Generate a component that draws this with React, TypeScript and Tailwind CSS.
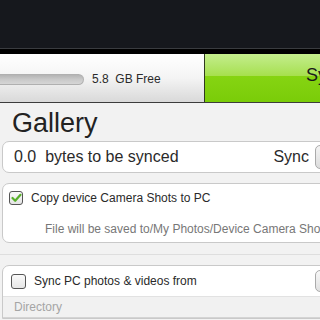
import React from 'react';

const font = { fontFamily: '"Liberation Sans", Arial, sans-serif' };

const App = () => {
  return (
    <div className="w-[320px] h-[320px] overflow-hidden bg-[#f2f2f2] relative" style={font}>
      {/* dark header */}
      <div className="h-[49px] bg-[#16181d] border-b border-[#3a3c40]" />
      <div className="h-[5px] bg-black" />

      {/* storage bar + sync button */}
      <div className="flex h-[49px] border-b border-[#3c3c3c]">
        <div className="flex-1 flex items-center bg-gradient-to-b from-[#ffffff] via-[#f4f4f4] to-[#d9d9d9]">
          <div className="w-[84px] h-[11px] rounded-r-full bg-gradient-to-b from-[#b4b4b4] via-[#c9c9c9] to-[#d6d6d6] border border-[#b0b0b0] border-l-0 mt-[2px]" />
          <span className="ml-[8px] text-[12px] text-[#2a2a2a] mt-[2px]">5.8&nbsp;&nbsp;GB Free</span>
        </div>
        <div className="w-[116px] border-l border-[#2f3a20] flex flex-col overflow-hidden">
          <div className="h-[22px] bg-gradient-to-b from-[#c4ed8c] to-[#a6e04c]" />
          <div className="flex-1 bg-gradient-to-b from-[#86d412] to-[#7acc08] relative">
            <span className="absolute left-[101px] top-[-14px] text-[18px] text-[#1a1a1a]">Sync</span>
          </div>
        </div>
      </div>

      {/* title */}
      <div className="pl-[12px] pt-[5px] h-[38px] text-[27px] leading-[30px] text-[#222]">Gallery</div>

      {/* bytes row */}
      <div className="ml-[2px] -mr-[16px] h-[32px] rounded-[7px] border border-[#c9c9c9] bg-white flex items-center pl-[11px]">
        <span className="text-[16px] text-[#2a2a2a]">0.0&nbsp;&nbsp;bytes to be synced</span>
        <span className="ml-auto text-[16px] text-[#2a2a2a]">Sync</span>
        <div className="ml-[6px] w-[20px] h-[24px] rounded-[5px] border border-[#aaa] bg-gradient-to-b from-[#f4f4f4] to-[#dcdcdc]" />
      </div>

      {/* copy shots box */}
      <div className="ml-[2px] -mr-[10px] mt-[10px] h-[60px] rounded-[7px] border border-[#c9c9c9] bg-white">
        <div className="flex items-center pl-[6px] pt-[5px]">
          <div className="w-[14px] h-[14px] rounded-[3px] border border-[#555] bg-gradient-to-b from-[#fafafa] to-[#e4e4e4] flex items-center justify-center">
            <svg width="11" height="10" viewBox="0 0 11 10">
              <path d="M1.5 5 L4.2 7.8 L9.5 1.8" fill="none" stroke="#58b02a" strokeWidth="2.2" strokeLinecap="round" strokeLinejoin="round" />
            </svg>
          </div>
          <span className="ml-[8px] text-[12px] text-[#2a2a2a]">Copy device Camera Shots to PC</span>
        </div>
        <div className="pl-[42px] mt-[13px] text-[12px] text-[#777] whitespace-nowrap">File will be saved to/My Photos/Device Camera Shots</div>
      </div>

      <div className="mt-[11px] h-px bg-[#dedede]" />

      {/* sync pc photos box */}
      <div className="ml-[2px] -mr-[16px] mt-[10px] rounded-t-[7px] border border-[#c9c9c9] bg-white">
        <div className="h-[30px] flex items-center pl-[8px]">
          <div className="w-[15px] h-[15px] rounded-[3px] border border-[#555] bg-gradient-to-b from-[#fafafa] to-[#e6e6e6]" />
          <span className="ml-[8px] text-[12px] text-[#2a2a2a]">Sync PC photos &amp; videos from</span>
          <div className="ml-auto w-[20px] h-[22px] rounded-[5px] border border-[#aaa] bg-gradient-to-b from-[#f8f8f8] to-[#e0e0e0]" />
        </div>
        <div className="h-[22px] bg-[#f1f1f1] border-t border-[#e2e2e2] border-b border-b-[#d4d4d4] flex items-center pl-[11px] text-[12px] text-[#a5a5a5]">
          Directory
        </div>
      </div>
    </div>
  );
};

export default App;
